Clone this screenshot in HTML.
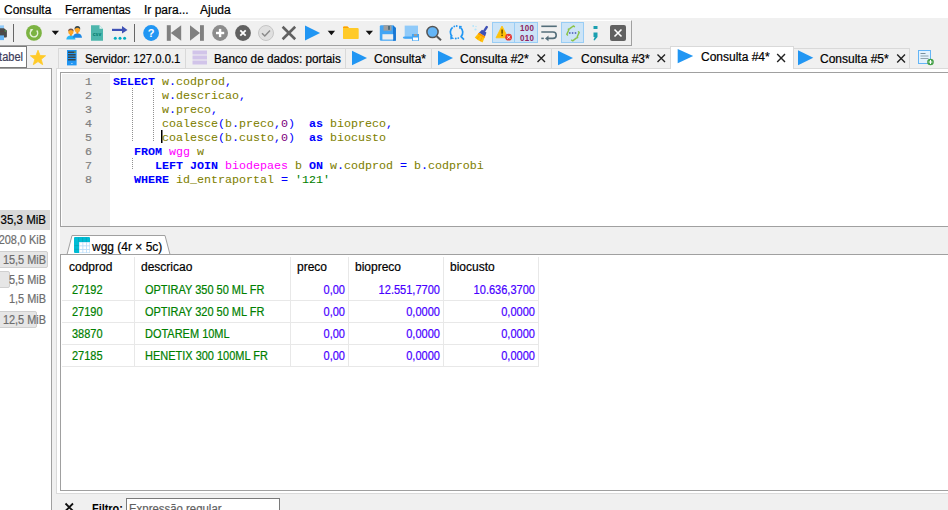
<!DOCTYPE html>
<html><head><meta charset="utf-8">
<style>
*{margin:0;padding:0;box-sizing:border-box}
html,body{width:948px;height:510px;overflow:hidden;background:#f0f0f0;font-family:"Liberation Sans",sans-serif;font-size:12px;color:#000;-webkit-text-stroke:0.2px currentColor}
.a{position:absolute}
.t{position:absolute;white-space:pre;line-height:1}
svg{position:absolute;overflow:visible}
#menu{left:0;top:0;width:948px;height:18px;background:#fff}
#tb{left:-2px;top:20px;width:634px;height:26px;border-top:1px solid #fff;border-right:1px solid #a0a0a0;border-bottom:1px solid #a0a0a0;background:#f0f0f0}
.code{-webkit-text-stroke:0.05px currentColor;font-family:"Liberation Mono",monospace;font-size:11.67px;position:absolute;white-space:pre;line-height:14px;left:113px;color:#808000}
.k{color:#0000ff;font-weight:bold}
.s{color:#0000ff}
.n{color:#800080}
.m{color:#ff00ff}
.g{color:#008000}
.ln{position:absolute;left:62px;width:30px;text-align:right;font-family:"Liberation Mono",monospace;font-size:11.67px;line-height:14px;color:#808080}
.tab{position:absolute;top:48px;height:20px;border:1px solid #d9d9d9;border-bottom:none;background:#f0f0f0}
.gh{position:absolute;top:261px;line-height:1}
.gc{position:absolute;line-height:1;color:#008000;white-space:nowrap;transform:scaleX(.915);transform-origin:0 0}
.gn{position:absolute;line-height:1;color:#4800ff;text-align:right;white-space:nowrap;transform:scaleX(.92);transform-origin:100% 0}
.mem{position:absolute;white-space:nowrap;width:52px;transform:scaleX(.91);transform-origin:100% 0;text-align:right;color:#6d6d6d;line-height:1}
</style></head>
<body>
<div class="a" id="menu"></div>
<div class="t" style="left:4px;top:4px">Consulta</div>
<div class="t" style="left:64.5px;top:4px;transform:scaleX(.965);transform-origin:0 0">Ferramentas</div>
<div class="t" style="left:144px;top:4px">Ir para...</div>
<div class="t" style="left:200px;top:4px">Ajuda</div>

<div class="a" id="tb"></div>
<!-- toolbar icons -->
<svg width="948" height="48" style="left:0;top:0">
 <!-- printer -->
 <rect x="0" y="25.4" width="4" height="3.5" fill="#90caf9"/>
 <path d="M-3 28.2 H4 L6.9 30.5 V36.5 Q6.9 37.6 5.8 37.6 H-3Z" fill="#4a4a4a"/>
 <rect x="-3" y="30.8" width="7" height="1" fill="#5d4037" opacity="0.6"/>
 <circle cx="5.3" cy="31" r="0.7" fill="#4caf50"/>
 <rect x="0" y="35.4" width="4" height="4.7" fill="#64b5f6"/>
 <rect x="13" y="24" width="1" height="18" fill="#666"/>
 <!-- refresh -->
 <circle cx="33.95" cy="32.9" r="7.9" fill="#7cb342"/>
 <path d="M32.1 29.9 A3.75 3.75 0 1 0 36.7 30.6" fill="none" stroke="#e6f2da" stroke-width="1.4"/>
 <path d="M30.3 28.9 L33.4 29.1 L30.7 31.9 Z" fill="#e6f2da"/>
 <path d="M51.7 30.7 L59 30.7 L55.35 35.1 Z" fill="#111"/>
 <!-- users -->
 <path d="M66.3 39.6 Q66.6 35.6 70.9 35.2 Q75.2 35.6 75.5 39.6 Z" fill="#29b6f6"/>
 <rect x="70" y="34" width="1.8" height="1.6" fill="#f57c00"/>
 <ellipse cx="70.9" cy="31.8" rx="2.6" ry="2.9" fill="#ffa726"/>
 <path d="M68.2 31.6 Q68 28.6 70.9 28.5 Q73.8 28.6 73.6 31.6 Q72.8 30 70.9 30 Q69 30 68.2 31.6Z" fill="#795548"/>
 <path d="M72.8 37.8 Q73.1 33.6 77.4 33.2 Q81.7 33.6 82 37.8 Z" fill="#1e88e5"/>
 <rect x="76.5" y="32" width="1.8" height="1.6" fill="#f57c00"/>
 <ellipse cx="77.4" cy="29.6" rx="2.7" ry="3" fill="#ffa726"/>
 <path d="M74.6 29.6 Q74.2 26.1 77.4 26 Q80.6 26.1 80.2 29.6 Q79.5 27.8 77.4 27.8 Q75.3 27.8 74.6 29.6Z" fill="#37474f"/>
 <!-- csv -->
 <path d="M91 25.2 H99.5 L103 28.7 V40.8 H91 Z" fill="#4db6ac"/>
 <path d="M99.5 25.2 V28.7 H103 Z" fill="#e0f2f1"/>
 <text x="97" y="36" font-family="Liberation Sans" font-size="5" font-weight="bold" fill="#00796b" text-anchor="middle">csv</text>
 <!-- arrow dots -->
 <rect x="112" y="28.8" width="11" height="2.2" fill="#3f51b5"/>
 <path d="M122 26 L127.5 29.9 L122 33.6 Z" fill="#3f51b5"/>
 <circle cx="115.3" cy="38.3" r="1.5" fill="#00acc1"/><circle cx="120" cy="38.3" r="1.5" fill="#00acc1"/><circle cx="124.6" cy="38.3" r="1.5" fill="#00acc1"/>
 <rect x="134" y="24" width="1" height="18" fill="#666"/>
 <!-- help -->
 <circle cx="151.1" cy="33" r="7.9" fill="#2196f3"/>
 <text x="151.1" y="37" font-family="Liberation Sans" font-size="11" font-weight="bold" fill="#fff" text-anchor="middle">?</text>
 <!-- first / last -->
 <rect x="166.8" y="25.2" width="4" height="15.6" fill="#808080"/>
 <path d="M170.8 33 L181.2 25.2 V40.8 Z" fill="#808080"/>
 <path d="M190 25.2 L200 33 L190 40.8 Z" fill="#808080"/>
 <rect x="200" y="25.2" width="3.9" height="15.6" fill="#808080"/>
 <!-- plus circle -->
 <circle cx="220.1" cy="33" r="7.9" fill="#8c8c8c"/>
 <rect x="216" y="31.8" width="8.2" height="2.4" fill="#fff"/>
 <rect x="218.9" y="28.9" width="2.4" height="8.2" fill="#fff"/>
 <!-- x circle -->
 <circle cx="243" cy="33" r="7.9" fill="#616161"/>
 <path d="M240.3 30.3 L245.7 35.7 M245.7 30.3 L240.3 35.7" stroke="#fff" stroke-width="1.8"/>
 <!-- check circle -->
 <circle cx="266" cy="33" r="7.5" fill="#e0e0e0" stroke="#bdbdbd" stroke-width="0.8"/>
 <path d="M262 33.3 L264.8 36 L270 30.5" fill="none" stroke="#8a8a8a" stroke-width="1.5"/>
 <!-- X -->
 <path d="M282.6 26.8 L295.2 39.2 M295.2 26.8 L282.6 39.2" stroke="#616161" stroke-width="2.6"/>
 <!-- play -->
 <path d="M305 25.6 L320.1 33.1 L305 40.6 Z" fill="#2196f3"/>
 <path d="M327.7 30.7 L335.1 30.7 L331.4 35.3 Z" fill="#111"/>
 <!-- folder -->
 <path d="M343 27.6 Q343 26.4 344.2 26.4 H347.5 L349 28 H357.5 Q358.7 28 358.7 29.2 V37.9 Q358.7 39.1 357.5 39.1 H344.2 Q343 39.1 343 37.9 Z" fill="#ffca28"/>
 <path d="M343 27.6 Q343 26.4 344.2 26.4 H347.5 L349 28 H343Z" fill="#ffa000"/>
 <path d="M365.7 30.8 L373 30.8 L369.35 35 Z" fill="#111"/>
 <!-- save -->
 <path d="M379.8 26.6 Q379.8 25.2 381.2 25.2 H393 L395.9 28 V39.4 Q395.9 40.8 394.5 40.8 H381.2 Q379.8 40.8 379.8 39.4 Z" fill="#42a5f5"/>
 <path d="M393 25.2 L395.9 28 V40.8 H393 Z" fill="#1976d2"/>
 <rect x="383.5" y="25.2" width="8" height="5.5" fill="#9e9e9e"/>
 <rect x="388" y="26" width="2" height="3.8" fill="#546e7a"/>
 <rect x="382.4" y="34.2" width="10.8" height="5.4" fill="#eceff1"/>
 <!-- save as -->
 <rect x="404.7" y="25.6" width="13.3" height="12.8" fill="#90caf9"/>
 <path d="M402.8 37.2 Q403 38.8 405 38.8 H412 V36.4 H404.7 Q403.4 36.4 402.8 37.2Z" fill="#42a5f5"/>
 <rect x="412" y="34" width="7" height="6.8" fill="#42a5f5"/>
 <rect x="413" y="37.5" width="5" height="2.8" fill="#fff"/>
 <rect x="414" y="34" width="3" height="2" fill="#9e9e9e"/>
 <!-- search -->
 <circle cx="432.5" cy="32" r="5.6" fill="#64b5f6" stroke="#555" stroke-width="1.5"/>
 <path d="M436.7 36.2 L441 40.3" stroke="#555" stroke-width="2"/>
 <!-- replace -->
 <g fill="#2196f3" stroke="none">
 <path d="M452.6 27.4 A6.2 6.2 0 0 0 452.2 36.6" fill="none" stroke="#2196f3" stroke-width="1.7"/>
 <path d="M450.2 35.8 L454.3 38.6 L450.3 39.4Z"/>
 <path d="M461.2 36.4 A6.2 6.2 0 0 0 460.6 27.6" fill="none" stroke="#2196f3" stroke-width="1.7"/>
 <path d="M459 25.8 L462.2 26 L459.2 29.2Z"/>
 <circle cx="454.3" cy="26.4" r="0.9"/><circle cx="456.7" cy="26" r="0.9"/>
 <circle cx="455.8" cy="38.5" r="0.9"/><circle cx="458.3" cy="38.1" r="0.9"/>
 <path d="M460.6 36.2 L464 39.6" stroke="#2196f3" stroke-width="1.7"/>
 </g>
 <!-- broom -->
 <g transform="translate(482,34.6) rotate(32)">
  <rect x="-1.2" y="-10" width="2.4" height="6.5" rx="0.8" fill="#3f51b5"/>
  <path d="M-2.6 -4.2 H2.6 L3.6 0 H-3.6Z" fill="#3f51b5"/>
  <path d="M-3.6 0 H3.6 L4.6 6.3 Q0 7.6 -4.6 6.3Z" fill="#ffc107"/>
  <path d="M-3.6 0 H3.6 L3.9 1.7 H-3.9Z" fill="#ff8f00"/>
  <path d="M-1.5 2.5 L-2 6.5 M1.5 2.5 L2 6.5" stroke="#ffa000" stroke-width="0.9"/>
 </g>
 <circle cx="473.2" cy="26" r="0.9" fill="#b3e5fc"/><circle cx="476" cy="26.5" r="0.7" fill="#b3e5fc"/><circle cx="475.5" cy="29.5" r="1.1" fill="#b3e5fc"/>
 <!-- pressed buttons -->
 <rect x="492.5" y="22.5" width="45" height="20" fill="#cce4f7" stroke="#99cdf5"/>
 <rect x="514" y="22.5" width="1" height="20" fill="#99cdf5"/>
 <rect x="561.5" y="22.5" width="22" height="20" fill="#cce4f7" stroke="#99cdf5"/>
 <!-- warning -->
 <path d="M502 26 L508 37.8 H496 Z" fill="#ffc107" stroke="#ffc107" stroke-linejoin="round" stroke-width="0.8"/>
 <rect x="501.3" y="29.5" width="1.6" height="4.2" fill="#6d5500"/>
 <rect x="501.3" y="34.6" width="1.6" height="1.5" fill="#6d5500"/>
 <circle cx="508.6" cy="37.2" r="3.4" fill="#e53935"/>
 <path d="M507.2 35.8 L510 38.6 M510 35.8 L507.2 38.6" stroke="#fff" stroke-width="1"/>
 <text x="527.2" y="31.3" font-family="Liberation Sans" font-size="8" font-weight="bold" letter-spacing="0.4" fill="#8e2461" text-anchor="middle" transform="translate(527.2 31.3) scale(1 1.08) translate(-527.2 -31.3)">100</text>
 <text x="527.2" y="40.7" font-family="Liberation Sans" font-size="8" font-weight="bold" letter-spacing="0.4" fill="#8e2461" text-anchor="middle" transform="translate(527.2 40.7) scale(1 1.08) translate(-527.2 -40.7)">010</text>
 <!-- wrap -->
 <rect x="541.3" y="25.5" width="15.5" height="1.6" fill="#546e7a"/>
 <path d="M541.3 32 H553 A3.2 3.2 0 0 1 553 38.4 H547" fill="none" stroke="#546e7a" stroke-width="1.6"/>
 <path d="M548.5 35.5 L545 38.4 L548.5 41.3Z" fill="#546e7a"/>
 <rect x="541.3" y="37.6" width="2.5" height="1.6" fill="#546e7a"/>
 <!-- braces -->
 <g fill="none" stroke="#8bc34a" stroke-width="1.5" stroke-linecap="round" stroke-linejoin="round">
  <path d="M574.4 26.7 L573.3 26 L569.8 28.7 L568.4 29.2 L568.7 30.3 L566.8 34.3 L567.5 35"/>
  <path d="M571.6 40.2 L572.7 40.8 L576.2 38.1 L577.6 37.6 L577.3 36.5 L579.2 32.5 L578.5 31.8"/>
 </g>
 <circle cx="569.8" cy="33" r="0.9" fill="#5c6bc0"/><circle cx="572.6" cy="33" r="0.9" fill="#5c6bc0"/><circle cx="575.5" cy="33" r="0.9" fill="#5c6bc0"/>
 <!-- semicolon -->
 <rect x="593.5" y="26" width="4" height="3" fill="#1a9fb0"/>
 <path d="M593.5 32.5 H597.5 V37 L594.5 40.5 L593.5 40 L594.7 37 H593.5Z" fill="#1a9fb0"/>
 <!-- X square -->
 <rect x="610" y="25" width="16" height="16" rx="2" fill="#616161"/>
 <path d="M614.5 29.5 L621.5 36.5 M621.5 29.5 L614.5 36.5" stroke="#fff" stroke-width="1.6"/>
</svg>

<!-- search box & star -->
<div class="a" style="left:-2px;top:46px;width:29px;height:22px;background:#fff;border:1px solid #7a7a7a"></div>
<div class="t" style="left:-3.5px;top:51px;color:#3c3c5a;transform:scaleX(.92);transform-origin:100% 0">tabel</div>
<svg width="948" height="80" style="left:0;top:0"><path d="M38.00 50.20 L40.00 55.45 L45.61 55.73 L41.23 59.25 L42.70 64.67 L38.00 61.60 L33.30 64.67 L34.77 59.25 L30.39 55.73 L36.00 55.45Z" fill="#ffca28" stroke="#ffca28" stroke-width="0.8" stroke-linejoin="round"/></svg>

<!-- tabs -->
<div class="a" style="left:56px;top:68px;width:892px;height:426px;background:#fff;border-left:1px solid #dadada;border-top:1px solid #dadada;border-bottom:1px solid #dadada"></div>
<div class="tab" style="left:58px;width:128px"></div>
<div class="tab" style="left:185px;width:161px"></div>
<div class="tab" style="left:345px;width:87px"></div>
<div class="tab" style="left:431px;width:121px"></div>
<div class="tab" style="left:551px;width:120px"></div>
<div class="tab" style="left:670px;top:46px;height:23px;width:124px;background:#fff"></div>
<div class="tab" style="left:793px;width:117px"></div>
<svg width="948" height="72" style="left:0;top:0">
 <!-- server icon -->
 <rect x="67" y="50" width="9.6" height="15.4" fill="#2196f3"/>
 <rect x="68" y="51.5" width="7.6" height="1.5" fill="#37474f"/>
 <rect x="68" y="54" width="7.6" height="1.5" fill="#37474f"/>
 <rect x="68" y="56.5" width="7.6" height="1.5" fill="#37474f"/>
 <rect x="68" y="59" width="7.6" height="1.5" fill="#37474f"/>
 <rect x="74.5" y="51.5" width="1" height="1.5" fill="#8bc34a"/>
 <rect x="71.3" y="63" width="1.2" height="1" fill="#bbdefb"/>
 <!-- db icon -->
 <rect x="192.5" y="50.5" width="14.5" height="4" fill="#d1c4e9"/>
 <rect x="192.5" y="55.5" width="14.5" height="4" fill="#d1c4e9"/>
 <rect x="192.5" y="60.5" width="14.5" height="4" fill="#d1c4e9"/>
 <!-- plays -->
 <path d="M352 50.8 L367 58 L352 65.2Z" fill="#2196f3"/>
 <path d="M438 50.8 L453 58 L438 65.2Z" fill="#2196f3"/>
 <path d="M558 50.8 L573 58 L558 65.2Z" fill="#2196f3"/>
 <path d="M677.7 48.9 L693.2 56.1 L677.7 63.3Z" fill="#2196f3"/>
 <path d="M798 50.3 L813.3 57.8 L798 65.3Z" fill="#2196f3"/>
 <!-- close Xs -->
 <path d="M537.5 54.5 L545 62 M545 54.5 L537.5 62" stroke="#222" stroke-width="1.4"/>
 <path d="M657.5 54.5 L665 62 M665 54.5 L657.5 62" stroke="#222" stroke-width="1.4"/>
 <path d="M777.2 54 L785 62 M785 54 L777.2 62" stroke="#222" stroke-width="1.4"/>
 <path d="M897.2 54.5 L905 62.5 M905 54.5 L897.2 62.5" stroke="#222" stroke-width="1.4"/>
 <!-- new tab icon -->
 <rect x="918.5" y="50.5" width="12" height="13" fill="#e3f2fd" stroke="#64b5f6"/>
 <rect x="920.5" y="53" width="5" height="1" fill="#78909c"/>
 <rect x="920.5" y="55.5" width="8" height="1" fill="#90a4ae"/>
 <rect x="920.5" y="58" width="8" height="1" fill="#90a4ae"/>
 <circle cx="930.5" cy="62" r="3.3" fill="#43a047"/>
 <path d="M928.6 62 H932.4 M930.5 60.1 V63.9" stroke="#fff" stroke-width="1.1"/>
</svg>
<div class="t" style="left:85px;top:53px;transform:scaleX(.94);transform-origin:0 0">Servidor: 127.0.0.1</div>
<div class="t" style="left:214px;top:53px;transform:scaleX(.98);transform-origin:0 0">Banco de dados: portais</div>
<div class="t" style="left:374px;top:53px">Consulta*</div>
<div class="t" style="left:460px;top:53px">Consulta #2*</div>
<div class="t" style="left:581px;top:53px">Consulta #3*</div>
<div class="t" style="left:701px;top:51px">Consulta #4*</div>
<div class="t" style="left:820px;top:53px">Consulta #5*</div>

<!-- left panel -->
<div class="a" style="left:-1px;top:68px;width:53px;height:442px;background:#fff;border-right:1px solid #a0a0a0;border-top:1px solid #a0a0a0"></div>
<div class="a" style="left:0;top:210px;width:50px;height:20px;background:#d9d9d9"></div>
<div class="a" style="left:-4px;top:251px;width:52px;height:17px;background:#e6e6e6;border:1px solid #d0d0d0;border-radius:2px"></div>
<div class="a" style="left:-4px;top:271px;width:14px;height:17px;background:#e6e6e6;border:1px solid #d0d0d0;border-radius:2px"></div>
<div class="a" style="left:-4px;top:311px;width:41px;height:17px;background:#e6e6e6;border:1px solid #d0d0d0;border-radius:2px"></div>
<div class="mem" style="left:-6px;top:214px;color:#000;transform:scaleX(.96)">35,3 MiB</div>
<div class="mem" style="left:-6px;top:234px">208,0 KiB</div>
<div class="mem" style="left:-6px;top:254px">15,5 MiB</div>
<div class="mem" style="left:-6px;top:274px">5,5 MiB</div>
<div class="mem" style="left:-6px;top:293px">1,5 MiB</div>
<div class="mem" style="left:-6px;top:314px">12,5 MiB</div>

<!-- editor -->
<div class="a" style="left:60px;top:72px;width:888px;height:155px;background:#fff;border-left:1px solid #a0a0a0;border-top:1px solid #a0a0a0;border-bottom:1px solid #a0a0a0"></div>
<div class="a" style="left:62px;top:74px;width:48px;height:152px;background:#f0f0f0"></div>
<div class="ln" style="top:75px">1<br>2<br>3<br>4<br>5<br>6<br>7<br>8</div>
<svg width="948" height="230" style="left:0;top:0">
 <path d="M132.5 88 V142 M153.5 88 V142 M132.5 158 V170" stroke="#909090" stroke-width="1" stroke-dasharray="1 1"/>
 <rect x="161" y="130" width="1.5" height="13" fill="#000"/>
</svg>
<div class="code" style="top:75px"><span class="k">SELECT</span> w<span class="s">.</span>codprod<span class="s">,</span>
       w<span class="s">.</span>descricao<span class="s">,</span>
       w<span class="s">.</span>preco<span class="s">,</span>
       coalesce<span class="s">(</span>b<span class="s">.</span>preco<span class="s">,</span><span class="n">0</span><span class="s">)</span>  <span class="k">as</span> biopreco<span class="s">,</span>
       coalesce<span class="s">(</span>b<span class="s">.</span>custo<span class="s">,</span><span class="n">0</span><span class="s">)</span>  <span class="k">as</span> biocusto
   <span class="k">FROM</span> <span class="m">wgg</span> w
      <span class="k">LEFT</span> <span class="k">JOIN</span> <span class="m">biodepaes</span> b <span class="k">ON</span> w<span class="s">.</span>codprod <span class="s">=</span> b<span class="s">.</span>codprobi
   <span class="k">WHERE</span> id_entraportal <span class="s">=</span> <span class="g">'121'</span></div>

<div class="a" style="left:60px;top:227px;width:888px;height:27px;background:#f0f0f0"></div>
<!-- results tab -->
<svg width="948" height="260" style="left:0;top:0">
 <path d="M67 254.5 L72 235.5 H165 L170 254.5" fill="#fff" stroke="#a0a0a0" stroke-width="1"/>
 <rect x="74" y="237" width="16" height="16" rx="1" fill="#00bcd4"/>
 <rect x="79" y="242" width="11" height="11" fill="#bbdefb"/>
 <path d="M78.6 237.5 V242 M82.6 237.5 V242 M86.3 237.5 V242 M74.5 245.6 H79 M74.5 249.3 H79" stroke="#0a9fb3" stroke-width="0.7"/>
 <rect x="79.6" y="242.6" width="2.8" height="2.8" fill="#fff"/><rect x="83.3" y="242.6" width="2.8" height="2.8" fill="#fff"/><rect x="87" y="242.6" width="2.4" height="2.8" fill="#fff"/>
 <rect x="79.6" y="246.3" width="2.8" height="2.8" fill="#fff"/><rect x="83.3" y="246.3" width="2.8" height="2.8" fill="#fff"/><rect x="87" y="246.3" width="2.4" height="2.8" fill="#fff"/>
 <rect x="79.6" y="250" width="2.8" height="2.4" fill="#fff"/><rect x="83.3" y="250" width="2.8" height="2.4" fill="#fff"/><rect x="87" y="250" width="2.4" height="2.4" fill="#fff"/>
</svg>
<div class="t" style="left:92px;top:241px">wgg (4r × 5c)</div>

<!-- results grid -->
<div class="a" style="left:60px;top:254px;width:888px;height:237px;background:#fff;border-left:1px solid #a0a0a0;border-top:1px solid #a0a0a0;border-bottom:1px solid #a0a0a0"></div>
<div class="a" style="left:134px;top:257px;width:1px;height:109px;background:#e8e8e8"></div>
<div class="a" style="left:290px;top:257px;width:1px;height:109px;background:#e8e8e8"></div>
<div class="a" style="left:348px;top:257px;width:1px;height:109px;background:#e8e8e8"></div>
<div class="a" style="left:443px;top:257px;width:1px;height:109px;background:#e8e8e8"></div>
<div class="a" style="left:538px;top:257px;width:1px;height:109px;background:#e8e8e8"></div>
<div class="a" style="left:62px;top:300px;width:477px;height:1px;background:#e8e8e8"></div>
<div class="a" style="left:62px;top:322px;width:477px;height:1px;background:#e8e8e8"></div>
<div class="a" style="left:62px;top:344px;width:477px;height:1px;background:#e8e8e8"></div>
<div class="a" style="left:62px;top:366px;width:477px;height:1px;background:#e8e8e8"></div>
<div class="gh" style="left:69px">codprod</div>
<div class="gh" style="left:141px">descricao</div>
<div class="gh" style="left:297px">preco</div>
<div class="gh" style="left:355px">biopreco</div>
<div class="gh" style="left:450px">biocusto</div>

<div class="gc" style="left:72px;top:284px">27192</div>
<div class="gc" style="left:72px;top:306px">27190</div>
<div class="gc" style="left:72px;top:328px">38870</div>
<div class="gc" style="left:72px;top:350px">27185</div>
<div class="gc" style="left:145px;top:284px">OPTIRAY 350 50 ML FR</div>
<div class="gc" style="left:145px;top:306px">OPTIRAY 320 50 ML FR</div>
<div class="gc" style="left:145px;top:328px">DOTAREM 10ML</div>
<div class="gc" style="left:145px;top:350px">HENETIX 300 100ML FR</div>
<div class="gn" style="left:290px;width:55px;top:284px">0,00</div>
<div class="gn" style="left:290px;width:55px;top:306px">0,00</div>
<div class="gn" style="left:290px;width:55px;top:328px">0,00</div>
<div class="gn" style="left:290px;width:55px;top:350px">0,00</div>
<div class="gn" style="left:348px;width:92px;top:284px">12.551,7700</div>
<div class="gn" style="left:348px;width:92px;top:306px">0,0000</div>
<div class="gn" style="left:348px;width:92px;top:328px">0,0000</div>
<div class="gn" style="left:348px;width:92px;top:350px">0,0000</div>
<div class="gn" style="left:443px;width:92px;top:284px">10.636,3700</div>
<div class="gn" style="left:443px;width:92px;top:306px">0,0000</div>
<div class="gn" style="left:443px;width:92px;top:328px">0,0000</div>
<div class="gn" style="left:443px;width:92px;top:350px">0,0000</div>

<!-- filter bar -->
<svg width="20" height="20" style="left:63px;top:500px"><path d="M2.5 3.5 L10 11 M10 3.5 L2.5 11" stroke="#111" stroke-width="1.8"/></svg>
<div class="t" style="left:92px;top:503px;font-weight:bold;-webkit-text-stroke:0;transform:scaleX(.91);transform-origin:0 0">Filtro:</div>
<div class="a" style="left:126px;top:498px;width:154px;height:20px;background:#fff;border:1px solid #7a7a7a"></div>
<div class="t" style="left:129px;top:503px;color:#5f5f5f;transform:scaleX(.95);transform-origin:0 0">Expressão regular</div>
</body></html>
